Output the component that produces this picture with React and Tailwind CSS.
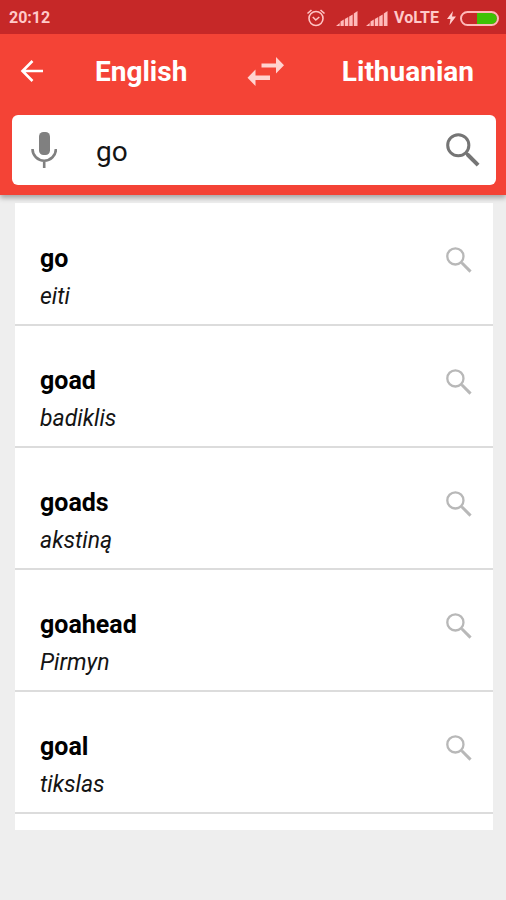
import React, { useState } from "react";

const RESULTS = [
    { word: "go", translation: "eiti" },
    { word: "goad", translation: "badiklis" },
    { word: "goads", translation: "akstiną" },
    { word: "goahead", translation: "Pirmyn" },
    { word: "goal", translation: "tikslas" },
];

const SearchIcon = ({ className }) => (
    <svg viewBox="0 0 36 36" className={className} fill="none" stroke="currentColor" aria-hidden="true">
        <circle cx="13" cy="13" r="11.2" strokeWidth="3.2" />
        <path d="M21 21l2.5 2.5" strokeWidth="3" />
        <path d="M22.500 22.500l11.500 11.500" strokeWidth="4.2" />
    </svg>
);

const MicIcon = () => (
    <svg viewBox="0 0 26 36" className="w-[26px] h-9" aria-hidden="true">
        <rect x="8" y="0" width="11" height="23" rx="4.5" fill="#808080" />
        <path d="M1.5 17a11.7 11.7 0 0 0 23.4 0M13.2 28.5V36" fill="none" stroke="#808080" strokeWidth="2.6" />
    </svg>
);

const BackIcon = () => (
    <svg viewBox="0 0 24 24" className="w-6 h-6" fill="none" stroke="white" strokeWidth="2.6" aria-hidden="true">
        <path d="M23 11H3M12.5 1L2.500 11l10 10" />
    </svg>
);

const SwapIcon = () => (
    <svg viewBox="0 0 38 30" className="w-[38px] h-[30px]" fill="#ffd3d0" aria-hidden="true">
        <path d="M15.5 6.500H30V0l8 8.300-8 8.300v-6H15.500z" />
        <path d="M24 18.500H9.500v-6l-8 8.300 8 8.300v-6H24z" />
    </svg>
);

const AlarmIcon = () => (
    <svg viewBox="0 0 20 18" className="w-5 h-[18px]" fill="none" stroke="#ffc4c4" strokeWidth="1.6" aria-hidden="true">
        <circle cx="10" cy="9.5" r="7" />
        <path d="M1.5 4.5l4-3.500M18.500 4.500l-4-3.500M6.800 8l3 3 3.500-3" />
    </svg>
);

const SignalIcon = () => (
    <svg viewBox="0 0 22 15" className="w-[22px] h-[15px]" fill="#ffb9b9" aria-hidden="true">
        <path d="M0 15l3.700-3v3zM4.500 10.500l3.300-2V15H4.500zM8.800 8l3.500-2v9H8.800zM13.200 5.500l3.500-2V15h-3.500zM17.800 2.500L21.500 0v15h-3.700z" />
    </svg>
);

const BoltIcon = () => (
    <svg viewBox="0 0 9 14" className="w-[9px] h-3.5" fill="#ffd0d0" aria-hidden="true">
        <path d="M6 0L0 8h3.500L2.500 14 9 5.500H5z" />
    </svg>
);

const BatteryIcon = () => (
    <svg viewBox="0 0 39 15" className="w-[39px] h-[15px]" aria-hidden="true">
        <path d="M17 2h14.500a5.500 5.500 0 0 1 0 11H17z" fill="#3fc105" />
        <rect x="1" y="1" width="37" height="13" rx="6.500" fill="none" stroke="#ffb9b9" strokeWidth="2" />
    </svg>
);

const StatusBar = () => (
    <div className="flex items-center h-[34px] pt-0.5 pl-[9px] pr-[7px] bg-[#c62828] text-[#ffc9c9] font-bold">
        <span className="text-base">20:12</span>
        <div className="flex items-center ml-auto">
            <AlarmIcon />
            <div className="flex gap-2 ml-2.5 mr-1.5">
                <SignalIcon />
                <SignalIcon />
            </div>
            <span className="text-base">VoLTE</span>
            <div className="flex items-center gap-1 ml-2">
                <BoltIcon />
                <BatteryIcon />
            </div>
        </div>
    </div>
);

const ResultRow = ({ word, translation }) => (
    <li className="flex items-start justify-between h-[122px] pl-[25px] pr-[21px] pt-[39px] border-b-2 border-[#dcdcdc]">
        <div>
            <h2 className="text-[25px] leading-8 font-bold text-black">{word}</h2>
            <p className="mt-1.5 text-[23px] leading-8 italic text-[#141414]">{translation}</p>
        </div>
        <button type="button" aria-label={`Look up ${word}`} className="mt-1 text-[#b8b8b8]">
            <SearchIcon className="w-[26px] h-[26px]" />
        </button>
    </li>
);

export default function App() {
    const [query, setQuery] = useState("go");

    return (
        <div className="min-h-screen bg-[#eeeeee] font-['Roboto','Liberation_Sans',sans-serif]">
            <header className="relative bg-[#f44336] pb-2.5 shadow-[0_3px_5px_rgba(0,0,0,0.3)]">
                <StatusBar />
                <div className="flex items-center h-[81px] pl-5 pr-8 pb-1.5 text-white">
                    <button type="button" aria-label="Back">
                        <BackIcon />
                    </button>
                    <div className="flex flex-1 items-center justify-between ml-[51px] text-[28px] font-bold">
                        <button type="button">English</button>
                        <button type="button" aria-label="Swap languages">
                            <SwapIcon />
                        </button>
                        <button type="button">Lithuanian</button>
                    </div>
                </div>
                <div className="flex items-center h-[70px] ml-3 mr-2.5 pl-[19px] pr-4 bg-white rounded-md">
                    <button type="button" aria-label="Voice search">
                        <MicIcon />
                    </button>
                    <input
                        type="text"
                        aria-label="Search word"
                        value={query}
                        onChange={(e) => setQuery(e.target.value)}
                        className="flex-1 min-w-0 ml-[39px] pt-1 text-[28px] text-[#141414] outline-none"
                    />
                    <button type="button" aria-label="Search" className="text-[#757575]">
                        <SearchIcon className="w-[34px] h-[34px]" />
                    </button>
                </div>
            </header>
            <ul className="mt-2 ml-[15px] mr-[13px] pt-px pb-4 bg-white">
                {RESULTS.map((result) => (
                    <ResultRow key={result.word} {...result} />
                ))}
            </ul>
        </div>
    );
}
